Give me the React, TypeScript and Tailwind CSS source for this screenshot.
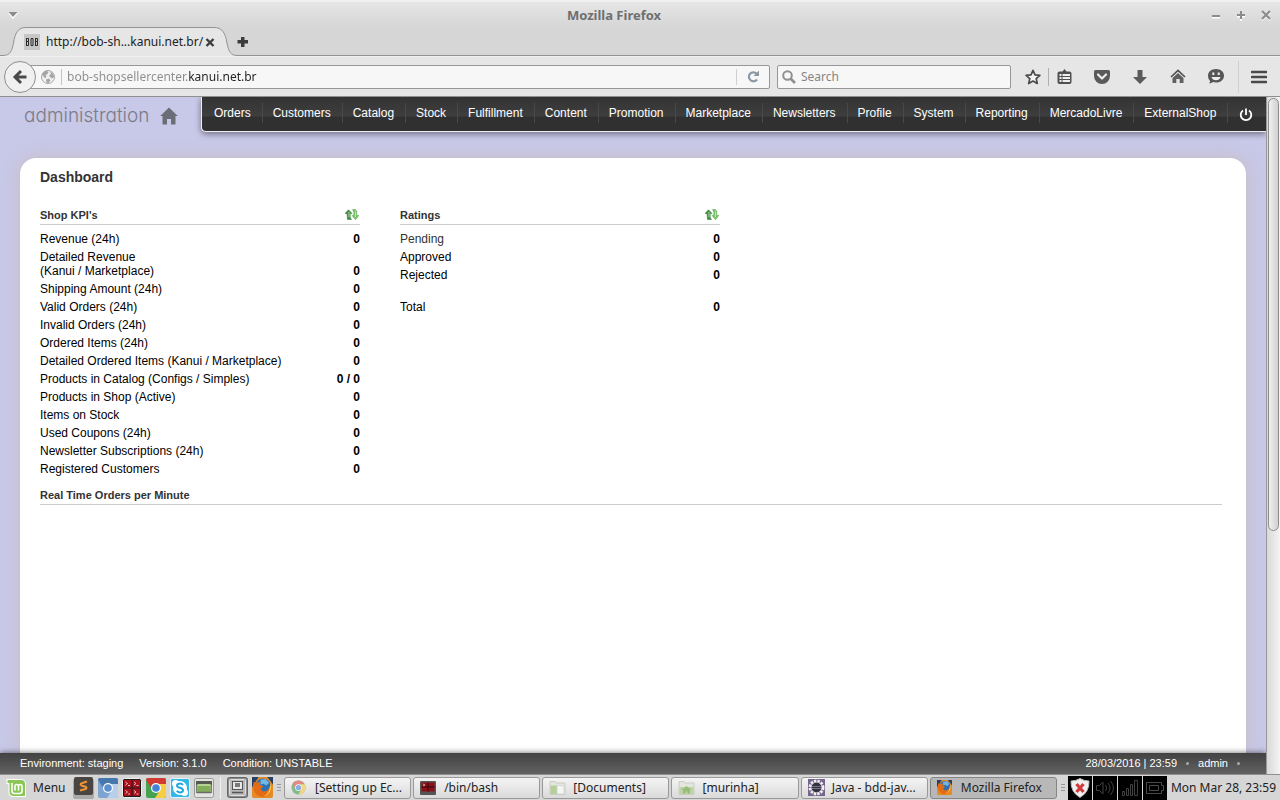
import React from "react";

type Row = { label: string; value: string; muted?: boolean };

const menu = [
  "Orders", "Customers", "Catalog", "Stock", "Fulfillment", "Content", "Promotion", "Marketplace",
  "Newsletters", "Profile", "System", "Reporting", "MercadoLivre", "ExternalShop",
];

const kpis: Row[] = [
  { label: "Revenue (24h)", value: "0" },
  { label: "Detailed Revenue\n(Kanui / Marketplace)", value: "0" },
  { label: "Shipping Amount (24h)", value: "0" },
  { label: "Valid Orders (24h)", value: "0" },
  { label: "Invalid Orders (24h)", value: "0" },
  { label: "Ordered Items (24h)", value: "0" },
  { label: "Detailed Ordered Items (Kanui / Marketplace)", value: "0" },
  { label: "Products in Catalog (Configs / Simples)", value: "0 / 0" },
  { label: "Products in Shop (Active)", value: "0" },
  { label: "Items on Stock", value: "0" },
  { label: "Used Coupons (24h)", value: "0" },
  { label: "Newsletter Subscriptions (24h)", value: "0" },
  { label: "Registered Customers", value: "0" },
];

const ratings: Row[] = [
  { label: "Pending", value: "0", muted: true },
  { label: "Approved", value: "0" },
  { label: "Rejected", value: "0" },
];

function TitleBar() {
  return (
    <header className="flex h-[27px] shrink-0 items-center border-t-2 border-[#f0f0f0] bg-linear-to-b from-[#e6e6e6] to-[#d6d6d6] px-2">
      <button aria-label="Window menu" className="w-[10px]">
        <svg width="10" height="8" viewBox="0 0 10 8">
          <path d="M0 2h10L5 8z" fill="#fff" />
          <path d="M0.5 1h9L5 6z" fill="#8c8c8c" />
        </svg>
      </button>
      <h1 className="flex-1 text-center text-[13px] leading-5 font-bold text-[#6f6f6f]">Mozilla Firefox</h1>
      <div className="flex w-[62px] justify-between">
        <button aria-label="Minimize">
          <svg width="12" height="12" viewBox="0 0 12 12"><path d="M2 8.5h8" stroke="#fff" strokeWidth="2" /><path d="M2 7h8" stroke="#8c8c8c" strokeWidth="2" /></svg>
        </button>
        <button aria-label="Maximize">
          <svg width="12" height="12" viewBox="0 0 12 12"><path d="M2 7.5h8M6 3v9" stroke="#fff" strokeWidth="2" /><path d="M2 6h8M6 2v8" stroke="#8c8c8c" strokeWidth="2" /></svg>
        </button>
        <button aria-label="Close window">
          <svg width="12" height="12" viewBox="0 0 12 12"><path d="M2 3l8 8M10 3l-8 8" stroke="#fff" strokeWidth="2" /><path d="M2 2l8 8M10 2l-8 8" stroke="#8c8c8c" strokeWidth="2.2" /></svg>
        </button>
      </div>
    </header>
  );
}

function TabStrip() {
  return (
    <div className="flex h-[29px] shrink-0 bg-[#d6d6d6]">
      <div className="relative flex w-[239px] items-center pl-6">
        <svg className="absolute inset-0" width="240" height="29" viewBox="0 0 240 29">
          <path d="M0 29V28.5H3C10 28.5 12 24 13.500 16C15 6 18 0.500 26 0.500H214C222 0.500 225.500 6 227 16C228.500 24 230.500 28.500 237 28.500H240V29z" fill="#e6e6e6" />
          <path d="M0 28.500H3C10 28.500 12 24 13.500 16C15 6 18 0.500 26 0.500H214C222 0.500 225.500 6 227 16C228.500 24 230.500 28.500 237 28.500H240" fill="none" stroke="#8f9499" />
        </svg>
        <a href="#tab" className="relative flex flex-1 items-center gap-[6px]">
          <svg width="16" height="16" viewBox="0 0 16 16" aria-hidden="true">
            <rect width="16" height="16" fill="#c6c6c6" />
            <path d="M2.500 4.500v7M2 4.500h2.500v3H2.500M2 11.500h2.500v-4M7 4.500h2v7H7zM11.500 4.500v7M11 4.500h2.500v3h-2M11 11.500h2.500v-4" fill="none" stroke="#2a2a2a" />
          </svg>
          <span className="text-[12px] leading-4 text-[#222]">http://bob-sh...kanui.net.br/</span>
        </a>
        <button aria-label="Close tab" className="relative mr-6">
          <svg width="10" height="10" viewBox="0 0 10 10"><path d="M1.500 2l7 7M8.500 2l-7 7" stroke="#3d3d3d" strokeWidth="2.400" /></svg>
        </button>
      </div>
      <div className="flex flex-1 items-center border-b border-[#939393]">
        <button aria-label="New tab" className="-ml-[2px]">
          <svg width="11" height="11" viewBox="0 0 11 11"><path d="M4 1h3.500v3H11v3.500H7.500V11H4V7.500H.5V4H4z" fill="#3d3d3d" /></svg>
        </button>
      </div>
    </div>
  );
}

function ToolbarIcons() {
  const cell = "flex h-8 w-[38px] items-center justify-center";
  return (
    <div className="flex items-center">
      <button aria-label="Bookmark" className="flex h-8 w-8 items-center justify-center pl-[2px]">
        <svg width="16" height="16" viewBox="0 0 16 16"><path d="M8 1.300l2 4.500 4.900.5-3.700 3.300 1.100 4.900L8 12l-4.300 2.500 1.100-4.900L1.100 6.300 6 5.800z" fill="#f4f4f4" stroke="#4a4a4a" strokeWidth="1.700" strokeLinejoin="round" /></svg>
      </button>
      <span className="h-[18px] w-px bg-[#b0b0b0]" />
      <button aria-label="Bookmarks list" className="flex h-8 w-[30px] items-center justify-center">
        <svg width="15" height="16" viewBox="0 0 15 16">
          <path d="M2.500 2.500h3L7.500 0l2 2.500h3a2 2 0 0 1 2 2V13a2 2 0 0 1-2 2h-10a2 2 0 0 1-2-2V4.500a2 2 0 0 1 2-2z" fill="#505050" />
          <path d="M2.500 5h2v2h-2zM5.500 5H13v2H5.500zM2.500 8h2v2h-2zM5.500 8H13v2H5.500zM2.500 11h2v2h-2zM5.500 11H13v2H5.500z" fill="#eee" />
        </svg>
      </button>
      <span className="w-1" />
      <button aria-label="Pocket" className={cell}>
        <svg width="16" height="14" viewBox="0 0 16 14"><path d="M1.500 0h13A1.500 1.500 0 0 1 16 1.500V6A8 8 0 0 1 0 6V1.500A1.500 1.500 0 0 1 1.500 0z" fill="#5a5a5a" /><path d="M4 4.500l4 4 4-4" fill="none" stroke="#eee" strokeWidth="2.200" strokeLinecap="round" strokeLinejoin="round" /></svg>
      </button>
      <button aria-label="Downloads" className={cell}>
        <svg width="14" height="14" viewBox="0 0 14 14"><path d="M4.500 0h5v7H14l-7 7-7-7h4.500z" fill="#5a5a5a" /></svg>
      </button>
      <button aria-label="Home" className={cell}>
        <svg width="16" height="15" viewBox="0 0 16 15"><path d="M1 8l7-6.500L15 8" fill="none" stroke="#505050" strokeWidth="1.700" /><path d="M2.500 9L8 4l5.500 5v5H9.700v-4H6.300v4H2.500z" fill="#606060" /></svg>
      </button>
      <button aria-label="Chat" className={cell}>
        <svg width="16" height="15" viewBox="0 0 16 15">
          <path d="M8 0c4.700 0 8 2.800 8 6.700s-3.300 6.800-8 6.800c-1 0-2-.1-2.800-.4C4 14 2.500 14.500 1 14.500c.7-.8 1.100-1.800 1.200-2.600C.8 10.600 0 8.800 0 6.700 0 2.800 3.300 0 8 0z" fill="#565656" />
          <rect x="4.300" y="3.500" width="2" height="2.500" fill="#eee" /><rect x="9.700" y="3.500" width="2" height="2.500" fill="#eee" />
          <path d="M3.500 8h9c-.4 2-2.200 3.300-4.500 3.300S3.900 10 3.500 8z" fill="#eee" />
        </svg>
      </button>
      <span className="ml-[3px] h-8 w-px bg-[#cfcfcf]" />
      <button aria-label="Open menu" className="flex h-8 w-10 items-center justify-center">
        <svg width="16" height="14" viewBox="0 0 16 14"><path d="M1 2h14M1 7h14M1 12h14" stroke="#4a4a4a" strokeWidth="2.600" strokeLinecap="round" /></svg>
      </button>
    </div>
  );
}

function NavBar() {
  return (
    <div className="flex h-[41px] shrink-0 items-center border-t border-b border-t-[#f0f0f0] border-b-[#8f8f8f] bg-[#e6e6e6] pr-px pl-1">
      <button aria-label="Back" className="z-10 flex h-8 w-8 shrink-0 items-center justify-center rounded-full border border-[#8f8f8f] bg-[#f0f0f0]">
        <svg width="16" height="16" viewBox="0 0 16 16"><path d="M9 2L3 8l6 6M3.500 8H14.500" fill="none" stroke="#4a4a4a" strokeWidth="3" /></svg>
      </button>
      <div className="-ml-2 flex h-6 min-w-0 flex-1 items-center rounded-[2px] border border-[#979797] bg-[#f7f7f7] pl-3">
        <svg className="shrink-0" width="14" height="14" viewBox="0 0 14 14">
          <circle cx="7" cy="7" r="6.500" fill="#f0f0f0" stroke="#a5a5a5" />
          <path d="M1 4.500C2 2 4 1 6 .8l1.500 1.700L6 4.500 4.500 5l1 1.500L4 8.500 3 7zM9 1.500c2.500 1 4 3 4 5.500l-2 1.500L9 7l-1-1.500L10 4zM5 9.500l3-1 1.500 2L7.500 13 5.500 12.500z" fill="#a5a5a5" />
        </svg>
        <span className="ml-[6px] h-4 w-px bg-[#c4c4c4]" />
        <input
          aria-label="Address"
          defaultValue="bob-shopsellercenter.kanui.net.br"
          className="ml-[5px] min-w-0 flex-1 bg-[linear-gradient(to_right,#8c8c8c_122px,#222_122px)] bg-clip-text text-[12px] leading-5 text-transparent outline-none"
        />
        <span className="h-4 w-px bg-[#d0d0d0]" />
        <button aria-label="Reload" className="flex w-8 justify-center">
          <svg width="13" height="13" viewBox="0 0 13 13"><path d="M10 9.500A4.500 4.500 0 1 1 9.500 3.500" fill="none" stroke="#8a98a5" strokeWidth="2.200" /><path d="M12 .5V6H6.500z" fill="#8a98a5" /></svg>
        </button>
      </div>
      <label className="ml-[7px] flex h-6 w-[234px] items-center rounded-[2px] border border-[#979797] bg-[#f7f7f7] pl-1">
        <svg width="14" height="14" viewBox="0 0 14 14"><circle cx="5.500" cy="5.500" r="4.300" fill="none" stroke="#909090" strokeWidth="2" /><path d="M8.500 8.500L13 13" stroke="#909090" strokeWidth="2.600" /></svg>
        <input aria-label="Search" placeholder="Search" className="ml-[5px] min-w-0 flex-1 text-[12px] leading-5 outline-none placeholder:text-[#858585]" />
      </label>
      <div className="ml-[5px] shrink-0"><ToolbarIcons /></div>
    </div>
  );
}

function AdminHeader() {
  return (
    <header className="flex h-[61px] shrink-0 items-start">
      <div className="flex w-[201px] shrink-0 items-center gap-[11px] pt-[7px] pl-6 text-[#7c7c86]">
        <span className="font-[Inter,sans-serif] text-[19px] leading-6 font-light [font-feature-settings:'cv11']">administration</span>
        <a href="#home" aria-label="Dashboard home">
          <svg width="18" height="18" viewBox="0 0 18 18"><path d="M9 .5L17.800 9H15.500v8.500H11V12H7v5.500H2.500V9H.2z" fill="#6d6d78" /></svg>
        </a>
      </div>
      <nav className="flex h-[35px] flex-1 items-center rounded-bl-[5px] border-b border-l border-[#eeeef6] bg-[linear-gradient(#333_0,#3e3e3e_19px,#303030_20px,#303030)] pb-[2px] pl-[2px] text-[12px] text-white shadow-[0_2px_6px_rgba(0,0,0,0.45)]">
        {menu.map((m) => (
          <a key={m} href={"#" + m} className="border-r border-[#494949] pr-[11px] pl-[10px] leading-5 whitespace-nowrap">{m}</a>
        ))}
        <a href="#logout" aria-label="Log out" className="pt-1 pl-[11px]">
          <svg width="14" height="14" viewBox="0 0 14 14"><path d="M4 2.500A5.300 5.300 0 1 0 10 2.500M7 .5V7" fill="none" stroke="#fff" strokeWidth="1.800" /></svg>
        </a>
      </nav>
    </header>
  );
}

function RefreshIcon() {
  return (
    <svg width="14" height="12" viewBox="0 0 14 12">
      <path d="M3.500.8L7 4.500H5.200V8.500L6.500 10.500H2.500L2 4.500H0z" fill="#3f9440" stroke="#2d6f30" strokeWidth=".5" />
      <path d="M7.500.5H10.500L11.800 2.500V6.500H13.800L10.500 10.800 7 6.500H8.800V3z" fill="#7cc46b" stroke="#56a34c" strokeWidth=".5" />
      <path d="M4 3v5M10.500 2.500v5.500" stroke="#d4f0cd" strokeWidth=".8" />
    </svg>
  );
}

function Panel({ title, rows, total }: { title: string; rows: Row[]; total?: string }) {
  return (
    <section className="w-80">
      <div className="flex h-5 items-center justify-between border-b border-[#ccc]">
        <h3 className="text-[11px] leading-4 font-bold text-[#333]">{title}</h3>
        <button aria-label={"Refresh " + title} className="pr-px"><RefreshIcon /></button>
      </div>
      <table className="mt-[5px] w-full border-collapse text-[12px] leading-[14px] text-black">
        <tbody>
          {rows.map((r) => (
            <tr key={r.label}>
              <th scope="row" className={"py-[2px] text-left font-normal whitespace-pre-line " + (r.muted ? "text-[#333]" : "")}>{r.label}</th>
              <td className="py-[2px] text-right align-bottom font-bold">{r.value}</td>
            </tr>
          ))}
          {total && (
            <tr>
              <th scope="row" className="pt-4 pb-[2px] text-left font-normal">Total</th>
              <td className="pt-4 pb-[2px] text-right font-bold">{total}</td>
            </tr>
          )}
        </tbody>
      </table>
    </section>
  );
}

function Page() {
  return (
    <div className="flex min-h-0 flex-1 bg-[#c8c8e8] font-['Liberation_Sans',Arial,sans-serif]">
      <div className="flex min-w-0 flex-1 flex-col overflow-hidden">
        <AdminHeader />
        <main className="mx-5 min-h-0 flex-1 rounded-t-2xl bg-white pr-6 pl-5 shadow-[0_0_18px_rgba(200,190,190,0.9)]">
          <h2 className="pt-[9px] text-[14px] leading-5 font-bold text-[#333]">Dashboard</h2>
          <div className="mt-[18px] flex gap-10">
            <Panel title="Shop KPI's" rows={kpis} />
            <Panel title="Ratings" rows={ratings} total="0" />
          </div>
          <h3 className="mt-[7px] h-5 border-b border-[#ccc] text-[11px] leading-5 font-bold text-[#333]">Real Time Orders per Minute</h3>
        </main>
        <footer className="z-10 flex h-[21px] shrink-0 items-center gap-4 bg-linear-to-b from-[#424242] to-[#626262] px-5 text-[11px] text-white shadow-[0_0_6px_rgba(0,0,0,0.6)]">
          <span>Environment: staging</span>
          <span>Version: 3.1.0</span>
          <span>Condition: UNSTABLE</span>
          <div className="ml-auto flex items-center gap-[9px] pr-[6px]">
            <span>28/03/2016 | 23:59</span>
            <span className="size-[3px] rounded-full bg-[#aaa]" />
            <a href="#admin">admin</a>
            <span className="size-[3px] rounded-full bg-[#aaa]" />
          </div>
        </footer>
      </div>
      <div className="w-[14px] shrink-0 border-l border-[#999] bg-linear-to-r from-[#d8d8d8] to-[#f4f4f4] px-px pt-px">
        <div className="h-[64%] rounded-full border border-[#8c8c8c] bg-linear-to-r from-[#f0f0f0] to-[#d0d0d0]" />
      </div>
    </div>
  );
}

function ChromeLogo({ size }: { size: number }) {
  return (
    <svg width={size} height={size} viewBox="0 0 20 20">
      <circle cx="10" cy="10" r="9.500" fill="#3fa357" />
      <path d="M1.800 5.200A9.500 9.500 0 0 1 18.200 5.500H10L6 12z" fill="#dc4a3d" />
      <path d="M18.200 5.500A9.500 9.500 0 0 1 9.500 19.500L14 12 12.500 5.500z" fill="#fccd3f" />
      <circle cx="10" cy="10" r="4.500" fill="#fff" /><circle cx="10" cy="10" r="3.500" fill="#4f86dd" />
    </svg>
  );
}

function FirefoxLogo({ size }: { size: number }) {
  return (
    <svg width={size} height={size} viewBox="0 0 22 22">
      <rect width="22" height="22" rx="2" fill="#e58a25" />
      <path d="M0 0h7L3 6l-3 5zM16 0h6v8l-3-4z" fill="#283f63" />
      <circle cx="11.500" cy="9.500" r="8" fill="#2c70b5" /><path d="M9 3l5-1 4 4-3 3-3-2-3 1z" fill="#70b7e5" />
      <path d="M2 5l3 1 4-1-1 3 4 2-3 2 2 3c4 1 7-2 8-6 3 6-2 12-8 12S-1 13 2 5z" fill="#e46b16" />
      <path d="M19 7c3 7-2 13-8 13 5-1 8-5 8-13z" fill="#ffd34b" />
    </svg>
  );
}

function TerminalIcon() {
  return (
    <svg width="20" height="20" viewBox="0 0 20 20">
      <rect x=".5" y=".5" width="19" height="19" rx="2" fill="#1c1c1c" stroke="#f0f0f0" />
      <path d="M2 2h7.500v7.500H2zM10.500 2H18v7.500h-7.500zM2 10.500h7.500V18H2zM10.500 10.500H18V18h-7.500z" fill="#a8101c" />
      <path d="M3.500 4l2 1.500-2 1.500M6 7.500h2M12 4l2 1.500-2 1.500M14.500 7.500h2M3.500 12.500l2 1.500-2 1.500M6 16h2M12 12.500l2 1.500-2 1.500M14.500 16h2" fill="none" stroke="#f3c9cc" strokeWidth=".9" />
    </svg>
  );
}

function FolderIcon({ home }: { home?: boolean }) {
  return (
    <svg width="17" height="16" viewBox="0 0 17 16">
      <path d="M1 1.500h5l1 1.500h9v11.500H1z" fill="#e3e6de" stroke="#c9cdc4" />
      {home ? <><path d="M1.500 7h14v7h-14z" fill="#bed3a6" /><path d="M8.500 6l5 4h-1.500v3.500H9.500v-2h-2v2H5V10H3.500z" fill="#98bd78" /></> : <><path d="M1.500 5.500H8v8.500H1.500z" fill="#b6cf99" /><path d="M8 5.500h5l2 2v6.500H8z" fill="#f4f4f2" stroke="#cfcfcf" strokeWidth=".7" /></>}
    </svg>
  );
}

function EclipseIcon() {
  return (
    <svg width="17" height="17" viewBox="0 0 17 17">
      <rect width="17" height="17" fill="#76668e" />
      <circle cx="8.500" cy="8.500" r="6.700" fill="none" stroke="#f1f1f1" strokeWidth="2.400" strokeDasharray="2.400 1.200" />
      <circle cx="8.500" cy="8.500" r="5.800" fill="#eee" /><circle cx="8.500" cy="8.500" r="5" fill="#35313f" />
      <path d="M4 7.500h9M4 9.500h9" stroke="#77748d" />
    </svg>
  );
}

function Handle() {
  return <svg width="4" height="8" viewBox="0 0 4 8" aria-hidden="true"><path d="M0 .5h4M0 3.500h4M0 6.500h4" stroke="#999" /></svg>;
}

const windows: { label: string; icon: React.ReactNode; active?: boolean }[] = [
  { label: "[Setting up Ec...", icon: <span className="opacity-60"><ChromeLogo size={15} /></span> },
  { label: "/bin/bash", icon: <svg width="16" height="14" viewBox="0 0 16 14"><rect width="16" height="14" rx="1" fill="#555" /><path d="M1.500 1.500h13v9h-13z" fill="#8c1018" /><path d="M1.500 6h13M8 1.500v9" stroke="#350508" /><path d="M3 3l2 1-2 1" stroke="#ddd" fill="none" strokeWidth=".7" /></svg> },
  { label: "[Documents]", icon: <FolderIcon /> },
  { label: "[murinha]", icon: <FolderIcon home /> },
  { label: "Java - bdd-jav...", icon: <EclipseIcon /> },
  { label: "Mozilla Firefox", icon: <FirefoxLogo size={15} />, active: true },
];

function Launchers() {
  return (
    <div className="flex items-center gap-1">
      <button aria-label="Sublime Text">
        <svg width="21" height="22" viewBox="0 0 21 22"><rect y="2" width="21" height="20" rx="2" fill="#a9a9a9" /><rect x="1" width="19" height="18" rx="2" fill="#4a4540" /><path d="M14 4.500L8 6.500Q7 8 9 8.700L12.500 9.700Q14.500 11 12.500 12L7 13.500" fill="none" stroke="#f09433" strokeWidth="2" /></svg>
      </button>
      <button aria-label="Chromium"><svg width="20" height="20" viewBox="0 0 20 20"><rect width="20" height="20" rx="2" fill="#7ea5d2" /><path d="M0 2Q0 0 2 0h16q2 0 2 2v4H10l-4 5z" fill="#4677ad" /><path d="M13 6h7v12q0 2-2 2H9l5-8z" fill="#b7cfea" /><circle cx="10" cy="10" r="5" fill="#fff" /><circle cx="10" cy="10" r="3.800" fill="#5b8fd0" /></svg></button>
      <button aria-label="Terminator"><TerminalIcon /></button>
      <button aria-label="Chrome"><svg width="20" height="20" viewBox="0 0 20 20"><rect width="20" height="20" rx="2" fill="#45a34f" /><path d="M0 2Q0 0 2 0h16q2 0 2 2v4H10l-4 5z" fill="#d23b32" /><path d="M13 6h7v12q0 2-2 2H9l5-8z" fill="#f7cd43" /><circle cx="10" cy="10" r="5" fill="#fff" /><circle cx="10" cy="10" r="3.800" fill="#4285d8" /></svg></button>
      <button aria-label="Skype">
        <svg width="20" height="20" viewBox="0 0 20 20"><rect x=".5" y=".5" width="19" height="19" rx="2" fill="#32b7e8" stroke="#e5f5fb" /><circle cx="10" cy="10" r="7" fill="#fff" /><circle cx="5.500" cy="5.500" r="3.500" fill="#fff" /><circle cx="14.500" cy="14.500" r="3.500" fill="#fff" /><path d="M13 7C11.500 5 7 5.200 7 7.500 7 10.500 13 9 13 12.300 13 15 8 15 6.800 12.800" fill="none" stroke="#20a9df" strokeWidth="2" /></svg>
      </button>
      <button aria-label="Show desktop">
        <svg width="20" height="20" viewBox="0 0 20 20"><rect x=".5" y=".5" width="19" height="19" rx="2" fill="#e4e4e0" stroke="#999" /><path d="M2 3h16v4H2z" fill="#555b50" /><path d="M2 7h1.500v8H2zM16.500 7H18v8h-1.500z" fill="#777d70" /><path d="M3.500 6h13v8h-13z" fill="#82ad59" /><path d="M3.500 6h13v2h-13z" fill="#b5d293" /><path d="M3 14.500h14" stroke="#6b6b6b" strokeWidth="1.500" /></svg>
      </button>
      <span className="mx-[2px] h-[22px] w-px bg-[#f0f0f0]" />
      <button aria-label="Files">
        <svg width="21" height="21" viewBox="0 0 21 21"><rect x=".5" y=".5" width="20" height="20" rx="2" fill="#8a8a8a" stroke="#666" /><rect x="2.500" y="2.500" width="16" height="16" rx="1" fill="#b9b9b9" stroke="#e0e0e0" /><rect x="5.500" y="4.500" width="10" height="8" fill="#e6e6e6" stroke="#555" /><path d="M8 7h5M8 9h5M5 15.500h11" stroke="#555" strokeWidth="1.500" /></svg>
      </button>
      <button aria-label="Firefox"><FirefoxLogo size={21} /></button>
    </div>
  );
}

function Tray() {
  const box = "flex h-6 w-6 items-center justify-center bg-black";
  return (
    <div className="flex shrink-0 gap-px">
      <button aria-label="Updates" className={box}><svg width="20" height="20" viewBox="0 0 20 20"><path d="M10 .5Q14 3 19 3 19.500 14 10 19.500.5 14 1 3 6 3 10 .5z" fill="#f1f1f1" stroke="#bbb" /><path d="M6.500 6l7 8M13.500 6l-7 8" stroke="#d33c3c" strokeWidth="3.200" /></svg></button>
      <button aria-label="Volume" className={box}><svg width="20" height="20" viewBox="0 0 20 20" fill="none" stroke="#414141"><path d="M1.500 7.500h3L8 4v12l-3.500-3.500h-3zM10.500 7q2.500 3 0 6M13 5q4 5 0 10M15.500 3q6 7 0 14" /></svg></button>
      <button aria-label="Network" className={box}><svg width="18" height="18" viewBox="0 0 18 18" fill="none" stroke="#414141"><path d="M1.500 12.500h2v4h-2zM5.500 9.500h2v7h-2zM9.500 5.500h2v11h-2zM13.500 1.500h3v15h-3z" /></svg></button>
      <button aria-label="Battery" className={box}><svg width="20" height="16" viewBox="0 0 20 16" fill="none" stroke="#4a4a4a"><path d="M1.500 2.500h15v3h2v5h-2v3h-15zM4.500 5.500h9v5h-9z" /></svg></button>
    </div>
  );
}

function Taskbar() {
  return (
    <div className="flex h-[26px] shrink-0 items-center border-t border-[#8f8f8f] bg-[#d6d6d6] pl-[6px] text-[12px] text-[#222]">
      <button className="flex w-[67px] shrink-0 items-center gap-[6px]">
        <svg width="21" height="20" viewBox="0 0 21 20"><path d="M.5 1H15a5 5 0 0 1 5 5v13H7a4.500 4.500 0 0 1-4.500-4.500V6H.5z" fill="#fff" /><path d="M1.500 2H15a4 4 0 0 1 4 4v12H7.500A4 4 0 0 1 3.500 14V5h-2z" fill="#8bc757" /><path d="M6 5v8q0 2.500 2.500 2.500h5Q16 15.500 16 13V8.500q0-2-1.700-2T12.500 8.500V12.500M12.500 8.500q0-2-1.800-2T9 8.500V12.500" fill="none" stroke="#fff" strokeWidth="1.600" /></svg>
        Menu
      </button>
      <Launchers />
      <span className="mr-[3px] ml-1"><Handle /></span>
      <div className="flex min-w-0 flex-1 gap-[2px]">
        {windows.map((w) => (
          <button
            key={w.label}
            className={
              "flex h-[22px] min-w-0 flex-1 items-center rounded-[3px] border pl-[6px] leading-5 whitespace-nowrap " +
              (w.active ? "border-[#858585] bg-[#b8b8b8]" : "border-[#999] bg-linear-to-b from-[#f4f4f4] to-[#dadada]")
            }
          >
            <span className="flex w-6 shrink-0">{w.icon}</span>
            {w.label}
          </button>
        ))}
      </div>
      <span className="mr-[3px] ml-1"><Handle /></span>
      <Tray />
      <time className="pr-1 pl-1 whitespace-nowrap">Mon Mar 28, 23:59</time>
    </div>
  );
}

export default function App() {
  return (
    <div className="flex h-screen flex-col overflow-hidden font-['Noto_Sans',sans-serif]">
      <TitleBar />
      <TabStrip />
      <NavBar />
      <Page />
      <Taskbar />
    </div>
  );
}
